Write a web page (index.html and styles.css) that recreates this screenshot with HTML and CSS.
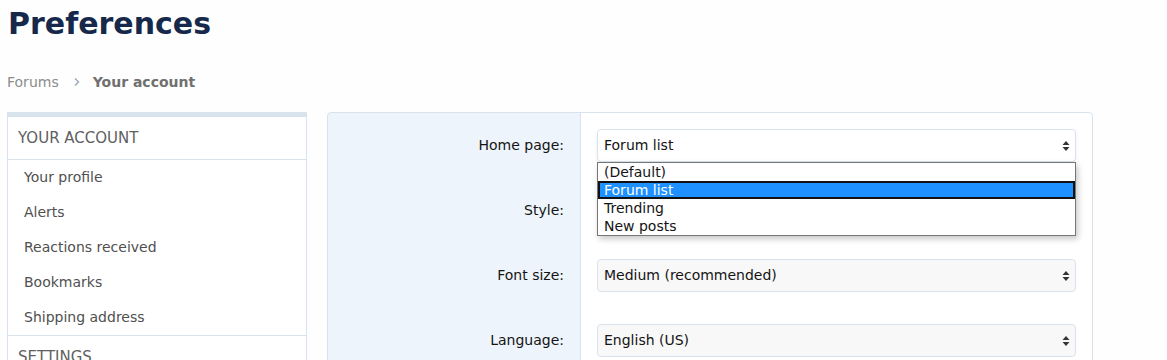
FILE: index.html
```html
<!DOCTYPE html>
<html lang="en">
<head>
    <meta charset="UTF-8">
    <title>Preferences</title>
    <link rel="stylesheet" href="styles.css">
</head>
<body>
    <div class="page">
        <h1 class="page-title">Preferences</h1>

        <!-- Breadcrumb -->
        <div class="crumbs">
            <span class="crumb">Forums</span>
            <span class="crumb-sep">
                <svg width="8" height="10" viewBox="0 0 8 10"><path d="M2 1.5 L5.5 5 L2 8.5" fill="none" stroke="#9aa9bb" stroke-width="1.4"/></svg>
            </span>
            <span class="crumb current">Your account</span>
        </div>

        <div class="layout">
            <!-- Sidebar -->
            <div class="side">
                <div class="side-head">YOUR ACCOUNT</div>
                <ul class="side-list">
                    <li>Your profile</li>
                    <li>Alerts</li>
                    <li>Reactions received</li>
                    <li>Bookmarks</li>
                    <li>Shipping address</li>
                </ul>
                <div class="side-head">SETTINGS</div>
            </div>

            <!-- Form -->
            <div class="panel">
                <div class="row">
                    <div class="label">Home page:</div>
                    <div class="field">
                        <div class="select open">
                            <span>Forum list</span>
                            <svg class="arrows" width="8" height="12" viewBox="0 0 8 12"><path d="M4 1 L7.5 5 L0.5 5 Z M4 11 L7.5 7 L0.5 7 Z" fill="#333"/></svg>
                            <div class="dropdown">
                                <div class="opt">(Default)</div>
                                <div class="opt selected">Forum list</div>
                                <div class="opt">Trending</div>
                                <div class="opt">New posts</div>
                            </div>
                        </div>
                    </div>
                </div>
                <div class="row">
                    <div class="label">Style:</div>
                    <div class="field">
                        <!-- covered by the open list above -->
                        <div class="select"></div>
                    </div>
                </div>
                <div class="row">
                    <div class="label">Font size:</div>
                    <div class="field">
                        <div class="select">
                            <span>Medium (recommended)</span>
                            <svg class="arrows" width="8" height="12" viewBox="0 0 8 12"><path d="M4 1 L7.5 5 L0.5 5 Z M4 11 L7.5 7 L0.5 7 Z" fill="#333"/></svg>
                        </div>
                    </div>
                </div>
                <div class="row">
                    <div class="label">Language:</div>
                    <div class="field">
                        <div class="select">
                            <span>English (US)</span>
                            <svg class="arrows" width="8" height="12" viewBox="0 0 8 12"><path d="M4 1 L7.5 5 L0.5 5 Z M4 11 L7.5 7 L0.5 7 Z" fill="#333"/></svg>
                        </div>
                    </div>
                </div>
            </div>
        </div>
    </div>
</body>
</html>
```

FILE: styles.css
```css
/* General */
body {
    margin: 0;
    padding: 0;
    background-color: #fefefe;
    font-family: "DejaVu Sans", Verdana, sans-serif;
    font-size: 14px;
    color: #141414;
}

.page {
    padding: 0 7px;
    width: 1086px;
}

.page-title {
    margin: 0;
    padding: 5px 1px 0;
    height: 43px;
    font-size: 30px;
    font-weight: bold;
    color: #16294a;
    line-height: 38px;
}

/* Breadcrumb */
.crumbs {
    display: flex;
    align-items: center;
    height: 24px;
    margin-top: 22px;
    margin-bottom: 18px;
    font-size: 14px;
}

.crumb {
    color: #8c8c8c;
}

.crumb.current {
    font-weight: bold;
    color: #707070;
}

.crumb-sep {
    display: flex;
    margin: 0 12px 0 14px;
}

.layout {
    display: flex;
    gap: 20px;
    align-items: flex-start;
}

/* Sidebar */
.side {
    width: 298px;
    flex: none;
    background: #fff;
    border: 1px solid #d8e3ee;
    border-top: 5px solid #d8e3ee;
}

.side-head {
    height: 42px;
    line-height: 42px;
    padding-left: 10px;
    font-size: 15px;
    color: #606060;
    border-bottom: 1px solid #d8e3ee;
}

.side-list {
    list-style: none;
    margin: 0;
    padding: 0;
    border-bottom: 1px solid #d8e3ee;
}

.side-list li {
    height: 35px;
    line-height: 35px;
    padding-left: 16px;
    font-size: 14px;
    color: #505050;
}

/* Form panel */
.panel {
    width: 764px;
    border: 1px solid #d8e3ee;
    border-radius: 4px;
    background: linear-gradient(to right, #edf4fb 0, #edf4fb 252px, #d8e3ee 252px, #d8e3ee 253px, #fff 253px);
}

.row {
    display: flex;
    height: 65px;
}

.row:first-child {
    margin-top: 16px;
}

.label {
    width: 236px;
    padding-right: 17px;
    height: 33px;
    line-height: 33px;
    text-align: right;
    color: #141414;
}

.field {
    padding-left: 16px;
}

.select {
    position: relative;
    box-sizing: border-box;
    width: 479px;
    height: 33px;
    line-height: 31px;
    padding-left: 6px;
    border: 1px solid #d8e3ee;
    border-radius: 4px;
    background: #f8f8f8;
    color: #141414;
}

.select.open {
    background: #fff;
    box-shadow: 0 2px 4px rgba(0, 0, 0, 0.06);
}

.arrows {
    position: absolute;
    right: 5px;
    top: 10px;
}

/* Open list of the home page select */
.dropdown {
    position: absolute;
    left: -1px;
    top: 32px;
    z-index: 10;
    width: 479px;
    box-sizing: border-box;
    background: #fff;
    border: 1px solid #767676;
    box-shadow: 2px 3px 6px rgba(0, 0, 0, 0.22);
    padding: 0;
}

.opt {
    height: 18px;
    line-height: 18px;
    padding-left: 6px;
    font-size: 14px;
    color: #141414;
}

.opt.selected {
    background: #1e90ff;
    color: #fff;
    outline: 2px solid #111;
    outline-offset: -2px;
}
```
